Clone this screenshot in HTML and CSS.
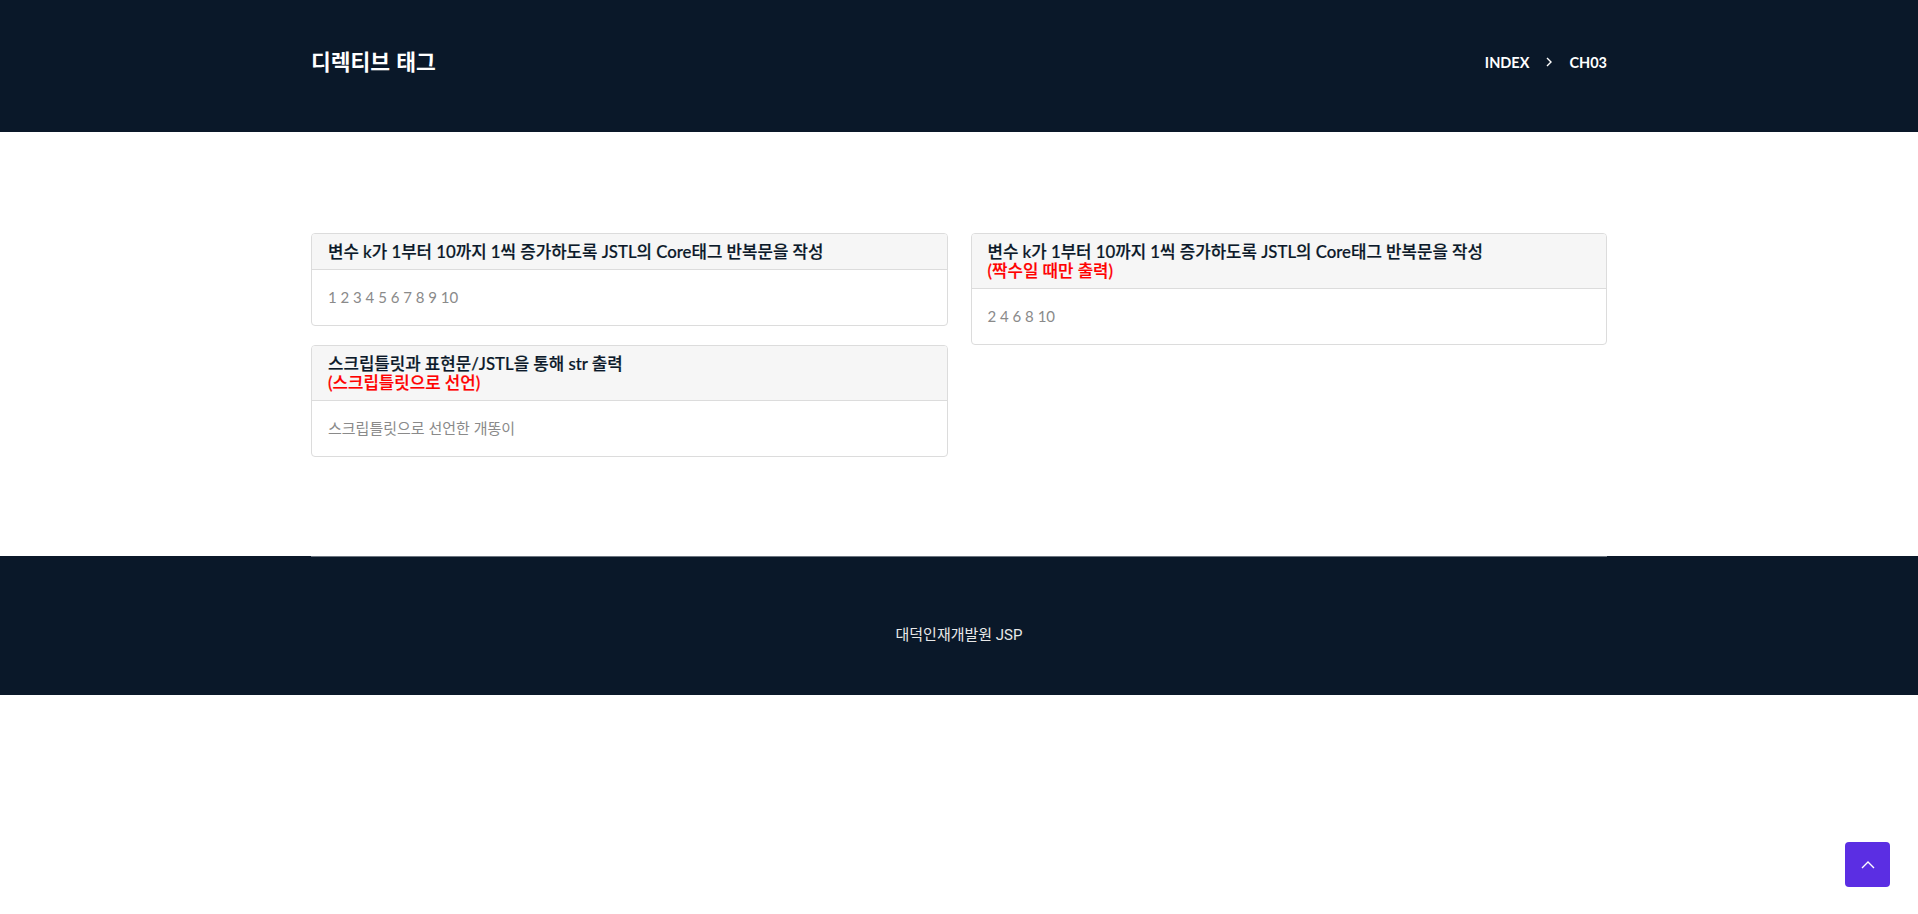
FILE: index.html
```html
<!DOCTYPE html>
<html lang="ko">
<head>
<meta charset="utf-8">
<title>디렉티브 태그</title>
<link rel="stylesheet" href="styles.css">
</head>
<body>
<header class="page-header">
  <div class="container header-inner">
    <h1 class="page-title">디렉티브 태그</h1>
    <nav class="crumbs">
      <span class="crumb">INDEX</span>
      <svg class="crumb-sep" width="12" height="12" viewBox="0 0 12 12"><path d="M4 2 L8 6 L4 10" fill="none" stroke="#fff" stroke-width="1.4"/></svg>
      <span class="crumb">CH03</span>
    </nav>
  </div>
</header>

<main class="content">
  <div class="container grid">
    <div class="col">
      <div class="card">
        <div class="card-header">변수 k가 1부터 10까지 1씩 증가하도록 JSTL의 Core태그 반복문을 작성</div>
        <div class="card-body">1 2 3 4 5 6 7 8 9 10</div>
      </div>
      <div class="card">
        <div class="card-header">스크립틀릿과 표현문/JSTL을 통해 str 출력<br><span class="red">(스크립틀릿으로 선언)</span></div>
        <div class="card-body">스크립틀릿으로 선언한 개똥이</div>
      </div>
    </div>
    <div class="col">
      <div class="card">
        <div class="card-header">변수 k가 1부터 10까지 1씩 증가하도록 JSTL의 Core태그 반복문을 작성<br><span class="red">(짝수일 때만 출력)</span></div>
        <div class="card-body">2 4 6 8 10</div>
      </div>
    </div>
  </div>
</main>

<footer class="page-footer">
  <div class="container footer-inner">
    <p class="copy">대덕인재개발원 JSP</p>
  </div>
</footer>

<a class="to-top" href="#">
  <svg width="18" height="18" viewBox="0 0 18 18"><path d="M3 12 L9 6 L15 12" fill="none" stroke="#fff" stroke-width="1.4"/></svg>
</a>
</body>
</html>
```

FILE: styles.css
```css
* { box-sizing: border-box; }
body {
  margin: 0;
  font-family: "Lato", "Noto Sans CJK KR", sans-serif;
  color: #0b1929;
  background: #fff;
}
.container {
  width: 1296px;
  margin: 0 auto;
}
.page-header {
  background: #0a1829;
  height: 132px;
}
.header-inner {
  height: 100%;
  display: flex;
  align-items: center;
  justify-content: space-between;
}
.page-title {
  margin: 0;
  color: #fff;
  font-size: 21.5px;
  font-weight: 700;
  font-family: "Noto Sans CJK KR", sans-serif;
  padding-bottom: 12px;
}
.crumbs {
  display: flex;
  align-items: center;
  gap: 11px;
  color: #fff;
  font-size: 14.5px;
  font-weight: 700;
  padding-bottom: 8px;
}
.crumb-sep { margin: 0 3px; }
.content {
  padding: 101px 0 99px;
}
.grid {
  display: grid;
  grid-template-columns: 1fr 1fr;
  column-gap: 23px;
  align-items: start;
}
.card {
  border: 1px solid #dcdcdc;
  border-radius: 4px;
  margin-bottom: 19px;
  overflow: hidden;
}
.col .card:last-child { margin-bottom: 0; }
.card-header {
  background: #f6f6f6;
  border-bottom: 1px solid #dcdcdc;
  padding: 8px 16px;
  font-size: 16.8px;
  font-weight: 500;
  line-height: 19px;
  color: #0b1929;
  -webkit-text-stroke: 0.2px #0b1929;
}
.red { color: #ff0000; -webkit-text-stroke: 0.2px #ff0000; }
.card-body {
  padding: 16px 16px 17px;
  font-size: 15px;
  line-height: 22px;
  color: #8a8a8a;
}
.page-footer {
  background: #0a1829;
}
.footer-inner {
  border-top: 1px solid #6c7580;
  height: 139px;
  padding-top: 14px;
  display: flex;
  align-items: center;
  justify-content: center;
}
.copy {
  margin: 0;
  color: #e8e8e8;
  font-size: 15px;
  font-family: "Roboto", "Noto Sans CJK KR", sans-serif;
}
.to-top {
  position: fixed;
  right: 28px;
  bottom: 27px;
  width: 45px;
  height: 45px;
  border-radius: 4px;
  background: #5b2ee3;
  display: flex;
  align-items: center;
  justify-content: center;
}
```
